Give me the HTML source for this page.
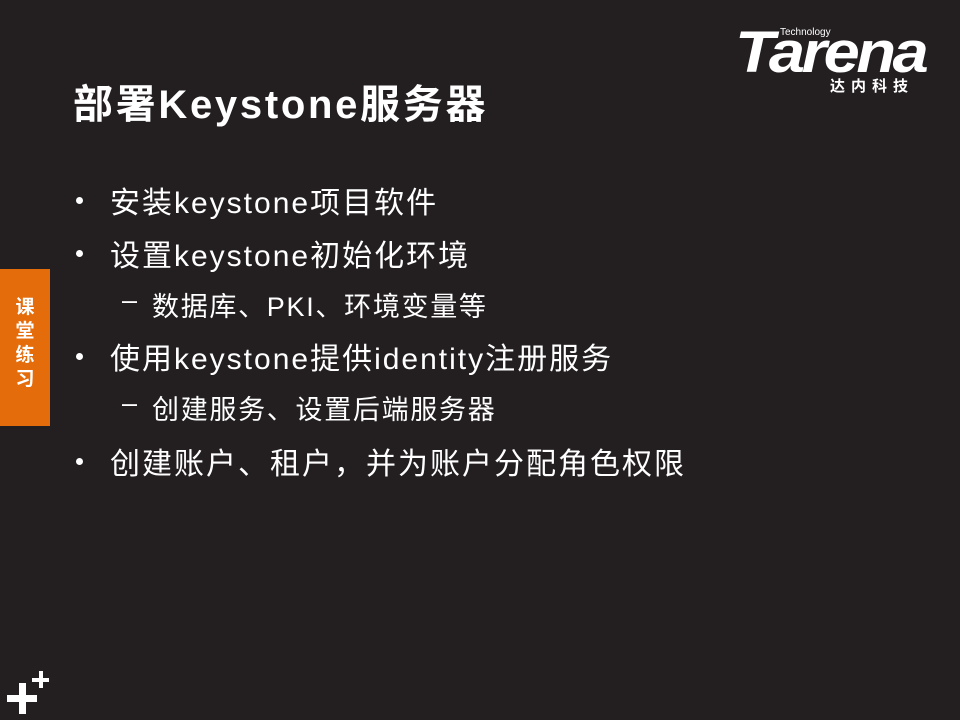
<!DOCTYPE html><html><head><meta charset="utf-8"><style>
body{margin:0;width:960px;height:720px;background:#231f20;position:relative;overflow:hidden;font-family:"Liberation Sans","Noto Sans CJK SC",sans-serif;color:#fff}
.a{position:absolute;white-space:nowrap}
.t{left:73px;top:72px;font-size:40px;font-weight:bold;letter-spacing:2.7px}
.b{font-size:30px;left:110px;letter-spacing:2px}
.d{position:absolute;left:-34px;top:19px;width:7px;height:7px;border-radius:50%;background:#fff}
.s{font-size:27px;left:152px;letter-spacing:1.7px}
.s span{position:absolute;left:-30px}
</style></head><body>
<div class="a t">部署Keystone服务器</div>
<div class="a b" style="top:178px"><span class="d"></span>安装keystone项目软件</div>
<div class="a b" style="top:231px"><span class="d"></span>设置keystone初始化环境</div>
<div class="a s" style="top:285px"><span>–</span>数据库、PKI、环境变量等</div>
<div class="a b" style="top:334px"><span class="d"></span>使用keystone提供identity注册服务</div>
<div class="a s" style="top:388px"><span>–</span>创建服务、设置后端服务器</div>
<div class="a b" style="top:439px"><span class="d"></span>创建账户、租户，并为账户分配角色权限</div>
<div class="a" style="left:0;top:269px;width:50px;height:157px;background:#e46c0a"></div>
<div class="a" style="left:13px;top:296px;width:24px;font-size:19px;font-weight:bold;line-height:24px;white-space:normal;text-align:center">课堂练习</div>
<div class="a" style="left:7px;top:695px;width:30px;height:7px;background:#fff"></div>
<div class="a" style="left:19px;top:683px;width:7px;height:31px;background:#fff"></div>
<div class="a" style="left:32px;top:678px;width:17px;height:4px;background:#fff"></div>
<div class="a" style="left:39px;top:671px;width:4px;height:17px;background:#fff"></div>
<div class="a" style="left:735px;top:24px;font-size:58px;font-weight:bold;font-style:italic;letter-spacing:-3px;line-height:58px;transform:scaleX(1.12);transform-origin:left">Tarena</div>
<div class="a" style="left:780px;top:27px;font-size:10px">Technology</div>
<div class="a" style="left:830px;top:75px;font-size:15px;font-weight:bold;letter-spacing:6px">达内科技</div>
</body></html>
